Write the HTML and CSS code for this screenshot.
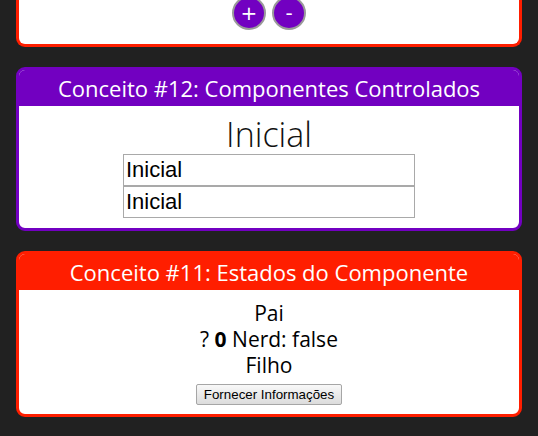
FILE: index.html
```html
<!DOCTYPE html>
<html lang="pt">
<head>
<meta charset="utf-8">
<link rel="stylesheet" href="styles.css">
</head>
<body>
<main class="page">
  <section class="card card-red card-cut">
    <div class="card-body counter">
      <button class="round">+</button>
      <button class="round">-</button>
    </div>
  </section>
  <section class="card card-purple">
    <h2 class="card-title">Conceito #12: Componentes Controlados</h2>
    <div class="card-body controlled">
      <div class="big">Inicial</div>
      <div class="inputs">
        <input class="field" type="text" value="Inicial">
        <input class="field" type="text" value="Inicial">
      </div>
    </div>
  </section>
  <section class="card card-red">
    <h2 class="card-title">Conceito #11: Estados do Componente</h2>
    <div class="card-body states">
      <div class="line">Pai</div>
      <div class="line">? <b>0</b> Nerd: false</div>
      <div class="line">Filho</div>
      <button class="plain">Fornecer Informações</button>
    </div>
  </section>
</main>
</body>
</html>
```

FILE: styles.css
```css
html, body {
  margin: 0;
  background: #212121;
}
.page {
  display: flex;
  flex-direction: column;
  gap: 20px;
  padding: 0 16px 20px;
  font-family: "Open Sans", sans-serif;
}
.card {
  background: #fff;
  border: 3px solid;
  border-radius: 9px;
  overflow: hidden;
}
.card-red { border-color: #ff1e00; }
.card-purple { border-color: #7200c1; }
.card-cut {
  border-top: none;
  border-radius: 0 0 9px 9px;
}
.card-title {
  margin: 0;
  height: 36px;
  line-height: 36px;
  text-align: center;
  color: #fff;
  font-weight: 400;
  font-size: 22px;
}
.card-red .card-title { background: #ff1e00; }
.card-purple .card-title { background: #7200c1; }
.counter {
  display: flex;
  justify-content: center;
  gap: 6px;
  margin-top: -4px;
  padding-bottom: 14px;
}
.round {
  width: 34px;
  height: 34px;
  border-radius: 50%;
  border: 2px solid #9a9a9a;
  background: #7200c1;
  color: #fff;
  font-family: "DejaVu Sans", sans-serif;
  font-size: 20px;
  padding: 0;
  line-height: 1;
}
.controlled {
  display: flex;
  flex-direction: column;
  align-items: center;
  padding: 8px 0 10px;
}
.big {
  font-size: 34px;
  font-weight: 300;
  line-height: 40px;
  color: #111;
}
.inputs {
  display: flex;
  flex-direction: column;
}
.field {
  box-sizing: border-box;
  width: 292px;
  height: 32px;
  margin: 0;
  border: 1px solid #a9a9a9;
  padding: 0 2px;
  font-family: "Liberation Sans", Arial, sans-serif;
  font-size: 22px;
  color: #000;
  outline: none;
}
.states {
  display: flex;
  flex-direction: column;
  align-items: center;
  padding: 10px 0 9px;
  color: #000;
}
.line {
  font-size: 21px;
  line-height: 26px;
}
.plain {
  margin-top: 6px;
  height: 21px;
  padding: 0 7px;
  font-family: "Liberation Sans", Arial, sans-serif;
  font-size: 13.33px;
  color: #000;
  background: linear-gradient(#f8f8f8, #dcdcdc);
  border: 1px solid #a6a6a6;
  border-radius: 2px;
}
```
